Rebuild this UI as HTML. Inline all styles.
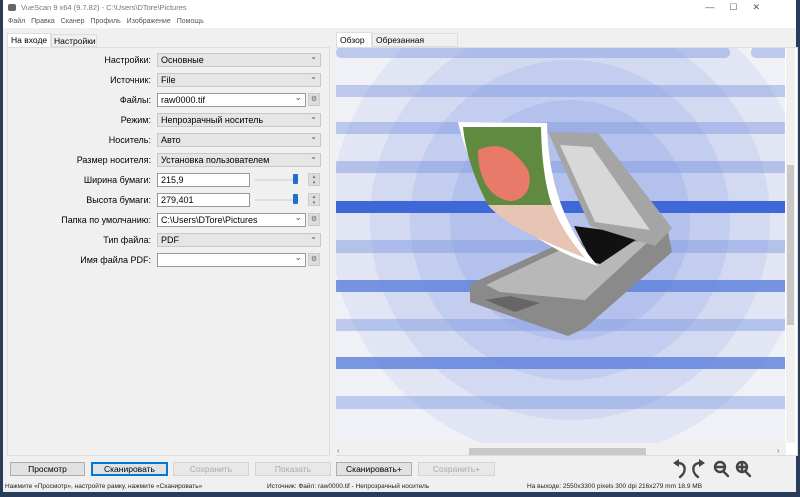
<!DOCTYPE html>
<html><head><meta charset="utf-8"><style>
*{box-sizing:border-box;margin:0;padding:0}
body{width:800px;height:497px;overflow:hidden;background:#2a3c5c;font-family:"Liberation Sans","Noto Sans CJK SC",sans-serif;font-size:9px;color:#000;position:relative}
.win{position:absolute;left:3px;top:0;width:793px;height:492px;background:#f0f0f0}
.abs{position:absolute}
.title{left:0;top:0;width:793px;height:15px;background:#fff;color:#777;font-size:7.5px;line-height:15px;padding-left:18px}
.menu{left:0;top:15px;width:793px;height:13px;background:#fff;color:#555;font-size:7px;line-height:13px;padding-left:5px;word-spacing:4px}
.lbl{position:absolute;right:645px;width:200px;text-align:right;font-size:9px;line-height:14px}
.sel{position:absolute;left:154px;width:164px;height:14px;background:#e5e5e5;border:1px solid #c8c8c8;font-size:9px;line-height:12px;padding-left:3px}
.sel:after{content:"⌄";position:absolute;right:3px;top:-3px;font-size:8px;color:#555}
.inp{position:absolute;left:154px;height:14px;background:#fff;border:1px solid #999;font-size:9px;line-height:12px;padding-left:3px}
.btn{position:absolute;top:462px;height:14px;background:#e1e1e1;border:1px solid #adadad;font-size:8.5px;line-height:12px;text-align:center}
.dis{color:#aaa;background:#e8e8e8;border-color:#d4d4d4}
.gear{position:absolute;left:305px;width:12px;height:13px;background:#ddd;border:1px solid #ccc;font-size:7px;text-align:center;line-height:11px;color:#666}
.st{position:absolute;top:483px;font-size:6.5px;color:#222}
</style></head><body>
<div class="win">
<div class="abs title"><span style="position:absolute;left:5px;top:4px;width:8px;height:7px;background:#666;border-radius:2px"></span>VueScan 9 x64 (9.7.82) - C:\Users\DTore\Pictures
<span style="position:absolute;right:36px;top:0;color:#555;font-size:9px">—&nbsp;&nbsp;&nbsp;&nbsp;&nbsp;&nbsp;☐&nbsp;&nbsp;&nbsp;&nbsp;&nbsp;&nbsp;✕</span></div>
<div class="abs menu">Файл Правка Сканер Профиль Изображение Помощь</div>
<div class="abs" style="left:4px;top:33px;width:44px;height:14px;background:#fff;border:1px solid #ddd;border-bottom:none;font-size:8.5px;line-height:13px;padding-left:3px">На входе</div>
<div class="abs" style="left:48px;top:34px;width:46px;height:13px;background:#f0f0f0;border:1px solid #ddd;font-size:8.5px;line-height:12px;padding-left:2px">Настройки</div>
<div class="abs" style="left:4px;top:47px;width:323px;height:409px;background:#f0f0f0;border:1px solid #ddd"></div>
<div class="lbl" style="top:53px">Настройки:</div><div class="sel" style="top:53px">Основные</div>
<div class="lbl" style="top:73px">Источник:</div><div class="sel" style="top:73px">File</div>
<div class="lbl" style="top:93px">Файлы:</div><div class="inp" style="top:93px;width:149px">raw0000.tif<span style="position:absolute;right:3px;top:-3px;color:#555">⌄</span></div><div class="gear" style="top:93px">⚙</div>
<div class="lbl" style="top:113px">Режим:</div><div class="sel" style="top:113px">Непрозрачный носитель</div>
<div class="lbl" style="top:133px">Носитель:</div><div class="sel" style="top:133px">Авто</div>
<div class="lbl" style="top:153px">Размер носителя:</div><div class="sel" style="top:153px">Установка пользователем</div>
<div class="lbl" style="top:173px">Ширина бумаги:</div><div class="inp" style="top:173px;width:93px">215,9</div>
<div class="lbl" style="top:193px">Высота бумаги:</div><div class="inp" style="top:193px;width:93px">279,401</div>
<div class="abs" style="left:252px;top:179px;width:44px;height:2px;background:#ddd"></div><div class="abs" style="left:290px;top:174px;width:5px;height:10px;background:#1e6fd0;border-radius:1px"></div>
<div class="abs" style="left:252px;top:199px;width:44px;height:2px;background:#ddd"></div><div class="abs" style="left:290px;top:194px;width:5px;height:10px;background:#1e6fd0;border-radius:1px"></div>
<div class="gear" style="top:173px;font-size:5px;line-height:6px">▴<br>▾</div><div class="gear" style="top:193px;font-size:5px;line-height:6px">▴<br>▾</div>
<div class="lbl" style="top:213px">Папка по умолчанию:</div><div class="inp" style="top:213px;width:149px">C:\Users\DTore\Pictures<span style="position:absolute;right:3px;top:-3px;color:#555">⌄</span></div><div class="gear" style="top:213px">⚙</div>
<div class="lbl" style="top:233px">Тип файла:</div><div class="sel" style="top:233px">PDF</div>
<div class="lbl" style="top:253px">Имя файла PDF:</div><div class="inp" style="top:253px;width:149px"><span style="position:absolute;right:3px;top:-3px;color:#555">⌄</span></div><div class="gear" style="top:253px">⚙</div>
<div class="abs" style="left:333px;top:32px;width:36px;height:15px;background:#fff;border:1px solid #ddd;border-bottom:none;font-size:8.5px;line-height:14px;padding-left:3px">Обзор</div>
<div class="abs" style="left:369px;top:33px;width:86px;height:14px;border:1px solid #ddd;font-size:8.5px;line-height:13px;padding-left:3px">Обрезанная область</div>
<div class="abs" style="left:333px;top:47px;width:462px;height:409px;background:#fff;border:1px solid #ddd"></div>
</div>
<svg class="abs" style="left:0;top:0" width="800" height="497" viewBox="0 0 800 497">
<defs><clipPath id="c"><rect x="336" y="48" width="449" height="395"/></clipPath></defs>
<g clip-path="url(#c)">
<rect x="336" y="48" width="449" height="395" fill="#f0f1f7"/>
<circle cx="570" cy="220" r="240" fill="#e1e5f4"/>
<circle cx="570" cy="220" r="200" fill="#d2d9f1"/>
<circle cx="570" cy="220" r="160" fill="#c2cdef"/>
<circle cx="570" cy="220" r="120" fill="#b4c1ec"/>
<g fill="#7f98e0" opacity=".45">
<rect x="336" y="47" width="394" height="11" rx="5"/><rect x="751" y="47" width="40" height="11" rx="5"/>
<rect x="336" y="85" width="450" height="12"/><rect x="336" y="122" width="450" height="12"/>
<rect x="336" y="161" width="450" height="12"/><rect x="336" y="240" width="450" height="13"/>
<rect x="336" y="319" width="450" height="12"/><rect x="336" y="396" width="450" height="13"/></g>
<g fill="#5d7fdc" opacity=".8"><rect x="336" y="280" width="450" height="12"/><rect x="336" y="357" width="450" height="12"/></g>
<rect x="336" y="201" width="450" height="12" fill="#3e68d8"/>
<path d="M470,284 L555,246 L668,232 L672,252 L585,328 L568,336 L470,302 Z" fill="#8a8a8a"/>
<path d="M486,285 L560,250 L650,240 L585,300 L500,292 Z" fill="#b8b8b8"/>
<path d="M574,226 L643,235 L600,264 L592,262 Z" fill="#111"/>
<path d="M548,132 L598,133 L672,228 L655,246 L590,226 Z" fill="#a5a5a5"/>
<path d="M560,145 L592,147 L650,230 L595,222 Z" fill="#d8d8d8"/>
<path d="M485,300 L510,296 L540,303 L515,312 Z" fill="#666"/>
<path d="M458,122 L547,123 C548,190 570,235 598,266 L580,260 C530,240 475,200 458,122 Z" fill="#fff"/>
<path d="M463,127 L541,127 C542,180 551,202 552,205 L488,205 C475,180 466,155 463,127 Z" fill="#5f8a3f"/>
<path d="M478,150 C500,140 515,150 528,170 C535,190 520,205 505,200 C490,195 478,180 478,150 Z" fill="#e87a6a"/>
<path d="M488,205 L552,205 C560,225 570,240 585,258 C540,240 505,225 488,205 Z" fill="#e8c4b4"/>
</g>
<rect x="786" y="48" width="9" height="395" fill="#f0f0f0"/><rect x="787" y="165" width="7" height="160" fill="#c8c8c8"/>
<rect x="336" y="443" width="450" height="12" fill="#f0f0f0"/><rect x="469" y="448" width="177" height="7" fill="#c8c8c8"/>
<text x="337" y="453" font-size="7" fill="#555" font-family="Liberation Sans">‹</text><text x="777" y="453" font-size="7" fill="#555" font-family="Liberation Sans">›</text>
<g fill="none" stroke="#444" stroke-width="2.4" stroke-linecap="round">
<path d="M680,477 C687,472 686,463 678,463"/><path d="M698,477 C691,472 692,463 700,463"/>
<circle cx="720" cy="467" r="5"/><path d="M723,471 L728,476"/><path d="M717,467 h6"/>
<circle cx="742" cy="467" r="5"/><path d="M745,471 L750,476"/><path d="M739,467 h6 M742,464 v6"/></g>
<path d="M673,463 L679,459 L679,467 Z" fill="#444"/><path d="M705,463 L699,459 L699,467 Z" fill="#444"/>
</svg>
<div class="btn" style="left:10px;width:75px">Просмотр</div>
<div class="btn" style="left:91px;width:77px;border-color:#0078d7;border-width:2px;line-height:10px">Сканировать</div>
<div class="btn dis" style="left:173px;width:76px">Сохранить</div>
<div class="btn dis" style="left:255px;width:76px">Показать</div>
<div class="btn" style="left:336px;width:76px">Сканировать+</div>
<div class="btn dis" style="left:418px;width:77px">Сохранить+</div>
<div class="st" style="left:5px">Нажмите «Просмотр», настройте рамку, нажмите «Сканировать»</div>
<div class="st" style="left:267px">Источник: Файл: raw0000.tif - Непрозрачный носитель</div>
<div class="st" style="left:527px">На выходе: 2550x3300 pixels 300 dpi 216x279 mm 18.9 MB</div>
</body></html>
